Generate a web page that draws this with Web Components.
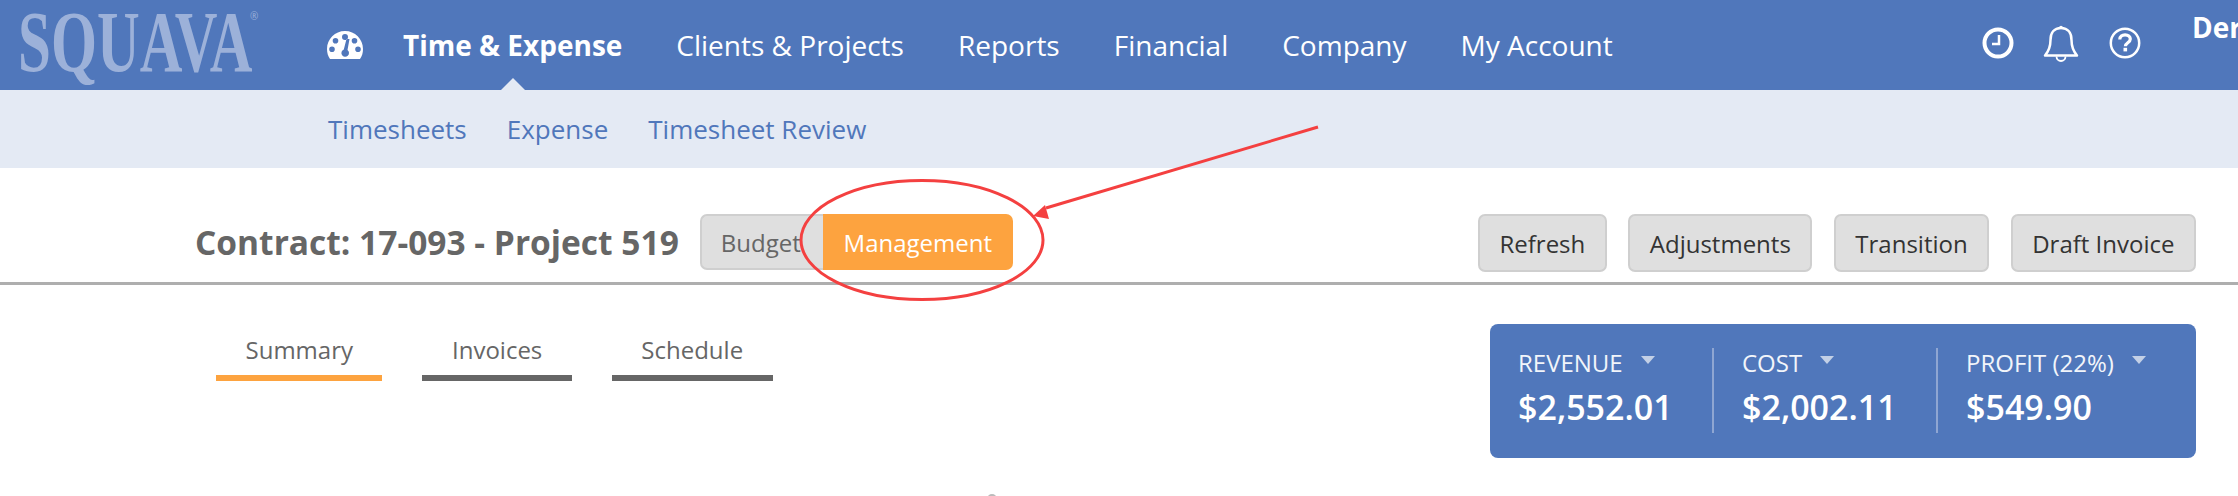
<!doctype html>
<html>
<head>
<meta charset="utf-8">
<title>Contract</title>
<style>
  html, body { margin: 0; padding: 0; background: #fff; overflow: hidden; }
  body { font-family: "Open Sans", "DejaVu Sans", sans-serif; width: 2238px; height: 496px; position: relative; }
</style>
</head>
<body>
<top-nav>
  <nav-link active>Time &amp; Expense</nav-link>
  <nav-link>Clients &amp; Projects</nav-link>
  <nav-link>Reports</nav-link>
  <nav-link>Financial</nav-link>
  <nav-link>Company</nav-link>
  <nav-link>My Account</nav-link>
</top-nav>
<sub-nav>
  <a>Timesheets</a>
  <a>Expense</a>
  <a>Timesheet Review</a>
</sub-nav>
<contract-header>
  <span slot="title">Contract: 17-093 - Project 519</span>
  <action-button>Refresh</action-button>
  <action-button>Adjustments</action-button>
  <action-button>Transition</action-button>
  <action-button>Draft Invoice</action-button>
</contract-header>
<contract-body>
  <tab-item slot="tabs" active>Summary</tab-item>
  <tab-item slot="tabs">Invoices</tab-item>
  <tab-item slot="tabs">Schedule</tab-item>
  <stat-cell slot="stats" label="REVENUE" value="$2,552.01" divider></stat-cell>
  <stat-cell slot="stats" label="COST" value="$2,002.11" divider></stat-cell>
  <stat-cell slot="stats" label="PROFIT (22%)" value="$549.90"></stat-cell>
</contract-body>
<red-callout></red-callout>

<script>
  function define(name, html) {
    customElements.define(name, class extends HTMLElement {
      connectedCallback() {
        if (this.shadowRoot) return;
        const shadow = this.attachShadow({ mode: "open" });
        shadow.innerHTML = typeof html === "function" ? html(this) : html;
      }
    });
  }

  define("top-nav", `
    <style>
      :host { display: flex; align-items: center; height: 90px; background: #5077bb; overflow: hidden; color: #fff; }
      .logo { width: 291px; height: 90px; flex: none; position: relative; }
      .logo span { position: absolute; left: 18px; top: -3px; font: 700 87px/90px "Liberation Serif", serif; color: #9cb1d9; transform: scaleX(.68); transform-origin: 0 0; white-space: nowrap; }
      .logo sup { position: absolute; left: 250px; top: 11px; font: 400 10px/1 "Open Sans", sans-serif; color: #9cb1d9; }
      .gauge { width: 36px; height: 28px; flex: none; margin-left: 36px; }
      .links { display: flex; gap: 54px; margin-left: 40px; height: 90px; }
      .right { margin-left: auto; width: 256px; flex: none; height: 90px; overflow: hidden; display: flex; align-items: center; }
      .right svg { flex: none; display: block; }
      .who { font: 700 28px/1 "Open Sans", sans-serif; margin-left: 51px; align-self: flex-start; margin-top: 13px; white-space: nowrap; }
    </style>
    <div class="logo"><span>SQUAVA</span><sup>®</sup></div>
    <svg class="gauge" viewBox="0 0 36 28">
      <path fill="#fff" fill-rule="evenodd" d="M3 28C1 25 0 22 0 18 0 8 8 0 18 0s18 8 18 18c0 4-1 7-3 10zM18 3a3 3 0 1 0 0 6 3 3 0 0 0 0-6zM8.500 7a2.800 2.800 0 1 0 0 5.600 2.800 2.800 0 0 0 0-5.600zM27.500 7a2.800 2.800 0 1 0 0 5.600 2.800 2.800 0 0 0 0-5.600zM5 15.500a2.800 2.800 0 1 0 0 5.600 2.800 2.800 0 0 0 0-5.600zM31 15.500a2.800 2.800 0 1 0 0 5.600 2.800 2.800 0 0 0 0-5.600zM22.500 8 L19.500 8 L16.800 18.500 A3.800 3.800 0 1 0 20.500 19z"/>
    </svg>
    <div class="links"><slot></slot></div>
    <div class="right">
      <svg width="32" height="32" viewBox="0 0 32 32" style="margin-top:-4px">
        <circle cx="16" cy="16" r="13.500" fill="none" stroke="#fff" stroke-width="4"/>
        <path d="M17 8v9h-7" fill="none" stroke="#fff" stroke-width="2.500"/>
      </svg>
      <svg width="36" height="38" viewBox="0 0 36 38" style="margin:-3px 0 0 29px">
        <path d="M18 3c-7 0-10.500 5-10.500 12 0 7-2.500 12-5.500 15.500h32C31 27 28.500 22 28.500 15 28.500 8 25 3 18 3z" fill="none" stroke="#fff" stroke-width="2.500" stroke-linejoin="round"/>
        <circle cx="18" cy="2.500" r="1.800" fill="#fff"/>
        <path d="M13.500 31.500a4.500 4.500 0 0 0 9 0" fill="none" stroke="#fff" stroke-width="1.800"/>
      </svg>
      <svg width="32" height="32" viewBox="0 0 32 32" style="margin:-4px 0 0 30px">
        <circle cx="16" cy="16" r="14.200" fill="none" stroke="#fff" stroke-width="2.500"/>
        <path d="M10.800 12.500c0-3 2.300-4.700 5.300-4.700s5.200 1.700 5.200 4.300c0 3.800-4.900 3.600-4.900 7.200" fill="none" stroke="#fff" stroke-width="3.200"/>
        <rect x="14.500" y="20.800" width="3.600" height="3.600" fill="#fff"/>
      </svg>
      <div class="who">Derek</div>
    </div>
  `);

  define("nav-link", (el) => `
    <style>
      :host { display: flex; align-items: center; height: 90px; position: relative; font-size: 28px; white-space: nowrap; color: #fff; font-weight: ${el.hasAttribute("active") ? 700 : 400}; }
      :host([active])::after { content: ""; position: absolute; left: 50%; bottom: 0; margin-left: -12px; border: 12px solid transparent; border-top: 0; border-bottom-color: #e4eaf4; }
    </style>
    <slot></slot>
  `);

  define("sub-nav", `
    <style>
      :host { display: flex; align-items: center; gap: 40px; height: 78px; padding-left: 328px; background: #e4eaf4; font-size: 26px; color: #5077bb; }
    </style>
    <slot></slot>
  `);

  define("seg-toggle", `
    <style>
      :host { display: flex; height: 56px; font-size: 24px; }
      div { display: flex; align-items: center; box-sizing: border-box; }
      .off { width: 123px; padding-left: 19px; background: #dfdfdf; border: 2px solid #cfcfcf; border-right: 0; border-radius: 7px 0 0 7px; color: #666; }
      .on { width: 190px; justify-content: center; background: #fda33f; color: #fff; border-radius: 0 7px 7px 0; }
    </style>
    <div class="off">Budget</div><div class="on">Management</div>
  `);

  define("action-button", `
    <style>
      :host { display: flex; align-items: center; height: 58px; padding: 0 19.500px; box-sizing: border-box; background: #dfdfdf; border: 2px solid #cfcfcf; border-radius: 7px; font-size: 24px; color: #333; white-space: nowrap; }
    </style>
    <slot></slot>
  `);

  define("contract-header", `
    <style>
      :host { display: flex; align-items: flex-start; height: 117px; box-sizing: border-box; padding: 46px 42px 0 195px; border-bottom: 3px solid #aeaeae; }
      .title { font-size: 33.500px; font-weight: 700; color: #666; line-height: 56px; white-space: nowrap; }
      seg-toggle { margin-left: 21px; }
      .actions { margin-left: auto; display: flex; gap: 21.500px; }
    </style>
    <div class="title"><slot name="title"></slot></div>
    <seg-toggle></seg-toggle>
    <div class="actions"><slot></slot></div>
  `);

  define("tab-item", (el) => `
    <style>
      :host { display: block; padding: 0 29.500px; height: 49px; box-sizing: border-box; border-bottom: 6px solid ${el.hasAttribute("active") ? "#fda33f" : "#666"}; font-size: 24px; line-height: 36px; color: #666; white-space: nowrap; }
    </style>
    <slot></slot>
  `);

  define("contract-body", `
    <style>
      :host { display: flex; align-items: flex-start; padding: 39px 42px 0 216px; position: relative; }
      .tabs { display: flex; gap: 40px; margin-top: 8px; }
      .stats { margin-left: auto; display: flex; width: 706px; height: 134px; box-sizing: border-box; background: #5077bb; border-radius: 8px; padding-top: 24px; }
      .spinner { position: absolute; left: 987px; top: 209px; width: 10px; height: 10px; border-radius: 50%; border: 2px solid #bbb; box-sizing: border-box; }
    </style>
    <div class="tabs"><slot name="tabs"></slot></div>
    <div class="stats"><slot name="stats"></slot></div>
    <div class="spinner"></div>
  `);

  define("stat-cell", (el) => `
    <style>
      :host { display: block; box-sizing: border-box; width: 224px; height: 85px; padding-left: 28px; color: #fff; }
      :host([divider]) { border-right: 2px solid #8fa6d2; }
      .label { display: flex; font-size: 24px; line-height: 30px; color: #f2f5fa; }
      .caret { margin: 8px 0 0 18px; width: 0; height: 0; border: 7px solid transparent; border-bottom: 0; border-top: 8px solid #c3d0e6; }
      .value { font-size: 34px; font-weight: 600; line-height: 44px; margin-top: 7px; }
    </style>
    <div class="label"><span>${el.getAttribute("label")}</span><i class="caret"></i></div>
    <div class="value">${el.getAttribute("value")}</div>
  `);

  // the red annotation drawn over the screenshot
  define("red-callout", `
    <style>
      :host { position: absolute; left: 0; top: 0; width: 2238px; height: 496px; pointer-events: none; }
      svg { display: block; }
    </style>
    <svg width="2238" height="496" viewBox="0 0 2238 496">
      <ellipse cx="922" cy="240" rx="121" ry="59.500" fill="none" stroke="#f44040" stroke-width="3"/>
      <path d="M1318 127L1046 208" stroke="#f44040" stroke-width="3" fill="none"/>
      <path d="M1033 216l12-11 4 14z" fill="#f44040"/>
    </svg>
  `);
</script>
</body>
</html>
